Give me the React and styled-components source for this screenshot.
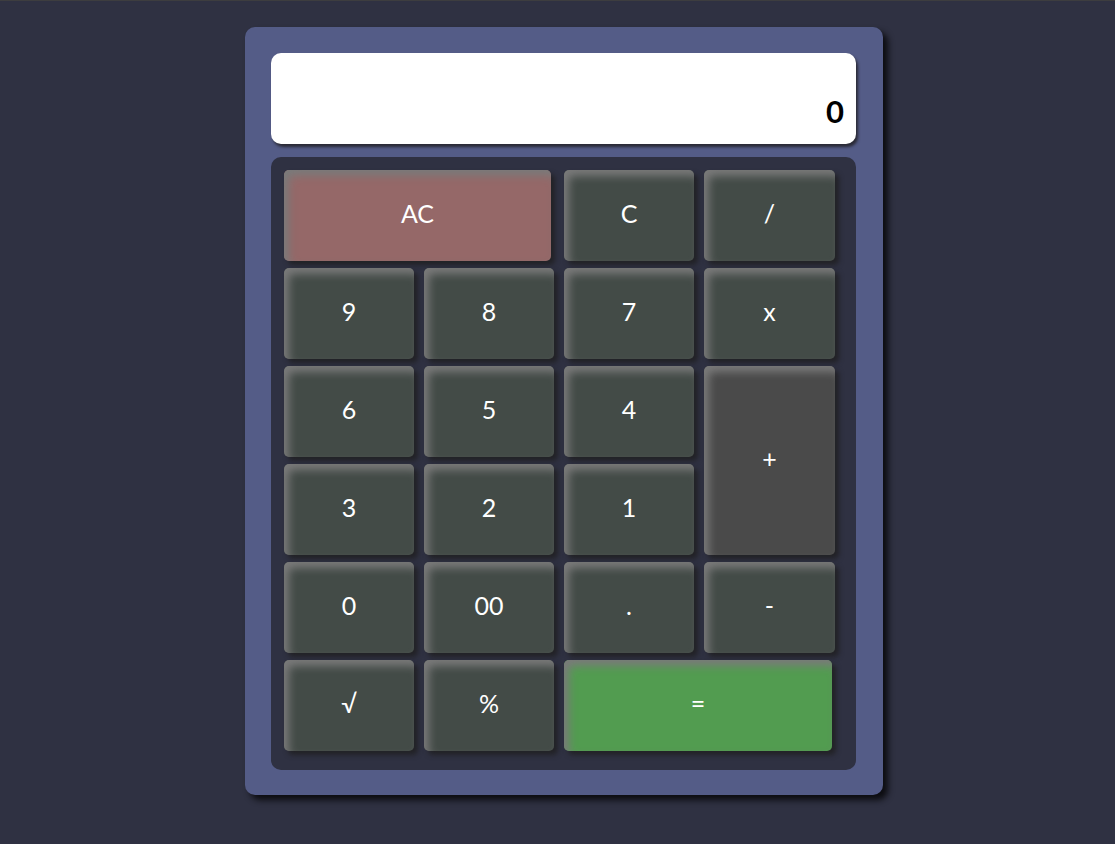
import React from 'react';
import styled, { createGlobalStyle } from 'styled-components';

const GlobalStyle = createGlobalStyle`
  html, body {
    margin: 0;
    padding: 0;
    background: #2f3142;
  }
  body {
    border-top: 1px solid #3d3d3f;
    font-family: "Lato", "DejaVu Sans", sans-serif;
  }
`

const Page = styled.div`
  height: 843px;
  display: flex;
  justify-content: center;
  align-items: flex-start;
  padding: 26px 0 0 13px;
  box-sizing: border-box;
`

const Calculator = styled.div`
  width: 638px;
  box-sizing: border-box;
  padding: 26px 27px 25px 26px;
  background: #545c87;
  border-radius: 10px;
  box-shadow: 5px 5px 6px #0c0c10;
`

const Display = styled.div`
  height: 91px;
  background: #fff;
  border-radius: 10px;
  box-shadow: 2px 3px 3px #2a2a35;
  display: flex;
  align-items: flex-end;
  justify-content: flex-end;
  padding: 0 12px 14px 0;
  box-sizing: border-box;
  font-size: 31px;
  font-weight: bold;
  color: #000;
  margin-bottom: 13px;
`

const Keypad = styled.div`
  background: #2f3142;
  border-radius: 10px;
  padding: 13px 22px 19px 13px;
  display: grid;
  grid-template-columns: repeat(3, 130px) 131px;
  grid-auto-rows: 91px;
  column-gap: 10px;
  row-gap: 7px;
`

const Key = styled.button`
  border: none;
  border-radius: 5px;
  background: ${p => p.$bg || '#434b47'};
  color: #fff;
  font-family: inherit;
  font-size: 25px;
  padding: 0 0 5px;
  grid-column: span ${p => p.$cols || 1};
  grid-row: span ${p => p.$rows || 1};
  margin-right: ${p => (p.$cols > 1 ? '3px' : '0')};
  box-shadow: inset 5px 6px 9px #7a7a7a, 4px 4px 5px #222226;
  cursor: pointer;
`

const colors = {
  ac: '#956868',
  plus: '#4a4a4a',
  eq: '#529c50'
};

const keys = [
  { label: 'AC', cols: 2, bg: colors.ac },
  { label: 'C' },
  { label: '/' },
  { label: '9' },
  { label: '8' },
  { label: '7' },
  { label: 'x' },
  { label: '6' },
  { label: '5' },
  { label: '4' },
  { label: '+', rows: 2, bg: colors.plus },
  { label: '3' },
  { label: '2' },
  { label: '1' },
  { label: '0' },
  { label: '00' },
  { label: '.' },
  { label: '-' },
  { label: '√' },
  { label: '%' },
  { label: '=', cols: 2, bg: colors.eq }
];

export default function App() {
  return (
    <Page>
      <GlobalStyle />
      <Calculator>
        <Display>0</Display>
        <Keypad>
          {keys.map(k => (
            <Key key={k.label} $cols={k.cols} $rows={k.rows} $bg={k.bg}>{k.label}</Key>
          ))}
        </Keypad>
      </Calculator>
    </Page>
  );
}
